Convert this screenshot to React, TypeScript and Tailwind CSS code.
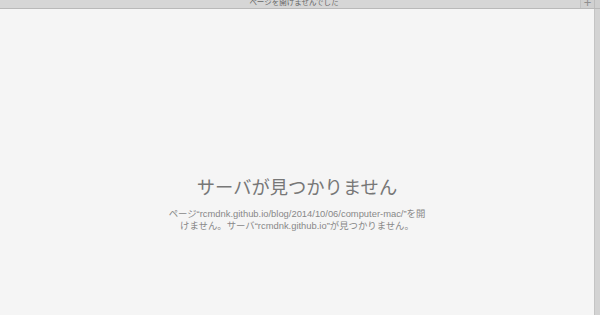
export default function App() {
    return (
        <div className="w-[600px] h-[315px] flex flex-col overflow-hidden bg-[#f5f5f5]" style={{ fontFamily: '"Liberation Sans", "Noto Sans CJK JP", sans-serif' }}>
            {/* tab strip */}
            <div className="h-[9px] flex bg-[#d6d6d6] border-b border-[#b9b9b9] overflow-hidden">
                <div className="flex-1 flex justify-center pl-[8px]">
                    <p className="text-[7.5px] leading-[8px] -mt-[1px] text-[#666]">ページを開けませんでした</p>
                </div>
                <div className="w-[14px] border-l border-[#c2c2c2] bg-[#d0d0d0] flex justify-center">
                    <span className="text-[13px] leading-[13px] -mt-[4px] text-[#8f8f8f] font-light">+</span>
                </div>
                <div className="w-[6px] border-l border-[#bdbdbd] bg-[#cfcfcf]"></div>
            </div>
            <div className="flex-1 flex">
                <div className="flex-1 flex flex-col items-center pt-[166px]">
                    <h1 className="text-[18.3px] leading-[26px] text-[#777]">サーバが見つかりません</h1>
                    <p className="mt-[7px] text-[9.4px] leading-[12px] text-[#888] text-center">
                        ページ“rcmdnk.github.io/blog/2014/10/06/computer-mac/”を開<br />
                        けません。サーバ“rcmdnk.github.io”が見つかりません。
                    </p>
                </div>
                <div className="w-[6px] border-l border-[#c4c4c4] bg-[#d3d3d3]"></div>
            </div>
        </div>
    );
}
